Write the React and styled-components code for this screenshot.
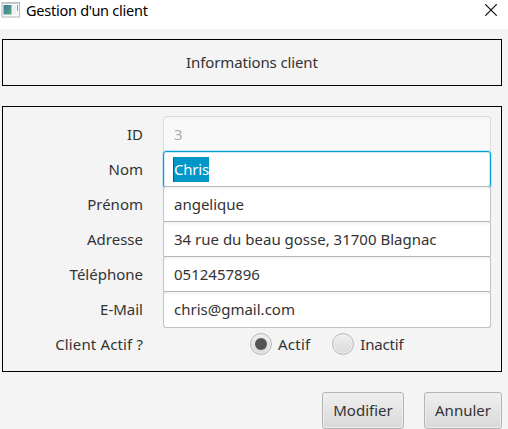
import React from "react";
import styled, { createGlobalStyle } from "styled-components";

const GlobalStyle = createGlobalStyle`
  * { box-sizing: border-box; }
  body {
    margin: 0;
    background: #f4f4f4;
    color: #333;
    font: 15px/20px "Noto Sans", "Open Sans", sans-serif;
    overflow: hidden;
  }
`;

const Dialog = styled.main`
  width: 508px;
  height: 429px;
  background: #f4f4f4;
`;

const TitleBar = styled.header`
  display: flex;
  align-items: flex-start;
  height: 29px;
  padding: 2px 11px 0 1px;
  background: #fff;
`;

const WindowIcon = styled.svg`
  width: 19px;
  height: 16px;
  flex: none;
`;

const Title = styled.h1`
  flex: 1;
  margin: -2px 0 0 6px;
  color: #000;
  font-size: 14.5px;
  font-weight: 400;
  line-height: 20px;
  letter-spacing: ${(p) => p.$spacing}px;
`;

const CloseIcon = styled.svg`
  width: 12px;
  height: 12px;
  margin-top: 2px;
`;

const Text = styled.span`
  white-space: nowrap;
  letter-spacing: ${(p) => p.$spacing || 0}px;
  margin-right: ${(p) => -(p.$spacing || 0)}px;
`;

const Banner = styled.section`
  display: flex;
  align-items: center;
  justify-content: center;
  width: 500px;
  height: 47px;
  margin: 10px 0 0 2px;
  padding-bottom: 1px;
  border: 1px solid #000;
`;

const FormPanel = styled.section`
  width: 500px;
  height: 266px;
  margin: 20px 0 0 2px;
  padding: 9px 10px 0;
  border: 1px solid #000;
`;

const Row = styled.div`
  display: grid;
  grid-template-columns: 130px 328px;
  column-gap: 20px;
  height: 35px;
`;

const Label = styled.div`
  padding-top: 8px;
  text-align: right;
`;

const Field = styled.div`
  height: 37px;
  padding: 7px 10px 0;
  border: 1px solid ${(p) => (p.$focused ? "#039ed3" : p.$disabled ? "#dcdcdc" : "#c2c2c2")};
  border-top-color: ${(p) => (p.$focused ? "#039ed3" : p.$disabled ? "#dcdcdc" : "#b5b5b5")};
  border-radius: 3px;
  background: ${(p) => (p.$disabled ? "linear-gradient(#f4f4f4, #f9f9f9 4px)" : "linear-gradient(#f3f3f3, #fff 4px)")};
  color: ${(p) => (p.$disabled ? "#acacac" : "#333")};
  ${(p) => p.$focused && "background: #fff; box-shadow: 0 0 0 1px #c5e6f1, inset 0 0 0 1px #c9e8f3;"}
`;

const Selection = styled.span`
  display: inline-block;
  height: 25px;
  margin-top: -2px;
  padding-top: 2px;
  margin-left: -1px;
  border-left: 1px solid #23566a;
  background: #0096c9;
  color: #fff;
`;

const Choices = styled.div`
  display: flex;
  gap: 22px;
  padding: 7px 0 0 87px;
`;

const Choice = styled.div`
  display: flex;
  gap: 6px;
  height: 22px;
  line-height: 22px;
`;

const Radio = styled.span`
  display: flex;
  align-items: center;
  justify-content: center;
  width: 22px;
  height: 22px;
  border: 1px solid #b9b9b9;
  border-radius: 50%;
  background: linear-gradient(#efefef, #dadada);
  box-shadow: inset 0 0 0 1px #eee;
  &::after {
    content: "";
    width: 12px;
    height: 12px;
    border-radius: 50%;
    background: ${(p) => (p.$checked ? "#555" : "transparent")};
  }
`;

const Actions = styled.footer`
  display: flex;
  justify-content: flex-end;
  gap: 20px;
  padding: 20px 6px 0 0;
`;

const Button = styled.button`
  width: ${(p) => p.$width}px;
  height: 37px;
  padding: 0 0 1px;
  border: 1px solid #b5b5b5;
  border-radius: 3px;
  background: linear-gradient(#efefef, #d9d9d9);
  box-shadow: inset 0 0 0 1px #ececec;
  color: #333;
  font: inherit;
`;

const fields = [
  { label: "ID", value: "3", disabled: true },
  { label: "Nom", value: "Chris", focused: true, spacing: -0.2 },
  { label: "Prénom", value: "angelique" },
  { label: "Adresse", value: "34 rue du beau gosse, 31700 Blagnac" },
  { label: "Téléphone", value: "0512457896" },
  { label: "E-Mail", value: "chris@gmail.com" },
];

export default function App() {
  return (
    <Dialog>
      <GlobalStyle />
      <TitleBar>
        <WindowIcon viewBox="0 0 19 16">
          <defs>
            <linearGradient id="screen" x1="0" y1="0" x2="1" y2="1">
              <stop offset="0" stopColor="#397b9e" />
              <stop offset="1" stopColor="#55a779" />
            </linearGradient>
          </defs>
          <rect x="1" y="0.5" width="17.5" height="14.5" fill="#f8f9fa" stroke="#b3b8bf" />
          <path d="M1 1.2h17.5" stroke="#c4c9cf" strokeWidth="1.5" />
          <rect x="2.5" y="3" width="8" height="9.5" fill="url(#screen)" />
          <path d="M12 3v9M14 3v9" stroke="#e4e7e8" />
          <path d="M16.5 3v6" stroke="#71ae91" />
        </WindowIcon>
        <Title $spacing={-0.25}>Gestion d'un client</Title>
        <CloseIcon viewBox="0 0 12 12">
          <path d="M0.3 0.3 11.7 11.7M11.7 0.3 0.3 11.7" stroke="#000" strokeWidth="1.1" />
        </CloseIcon>
      </TitleBar>
      <Banner><Text $spacing={-0.12}>Informations client</Text></Banner>
      <FormPanel>
        {fields.map((f) => (
          <Row key={f.label}>
            <Label><Text>{f.label}</Text></Label>
            <Field $disabled={f.disabled} $focused={f.focused}>
              {f.focused
                ? <Selection><Text $spacing={f.spacing}>{f.value}</Text></Selection>
                : <Text $spacing={f.spacing}>{f.value}</Text>}
            </Field>
          </Row>
        ))}
        <Row>
          <Label><Text $spacing={0.15}>Client Actif ?</Text></Label>
          <Choices>
            <Choice><Radio $checked /><Text $spacing={0.25}>Actif</Text></Choice>
            <Choice><Radio /><Text $spacing={-0.15}>Inactif</Text></Choice>
          </Choices>
        </Row>
      </FormPanel>
      <Actions>
        <Button $width={82}><Text>Modifier</Text></Button>
        <Button $width={78}><Text>Annuler</Text></Button>
      </Actions>
    </Dialog>
  );
}
